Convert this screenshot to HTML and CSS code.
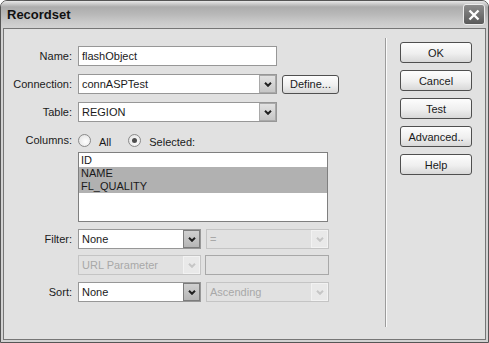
FILE: index.html
```html
<!DOCTYPE html>
<html lang="en">

<head>
    <meta charset="UTF-8">
    <meta name="viewport" content="width=device-width, initial-scale=1.0">
    <title>Recordset</title>
    <link rel="stylesheet" href="styles.css">
</head>

<body>
    <div class="window">
        <div class="titlebar">
            <span class="title">Recordset</span>
            <span class="close">
                <svg width="12" height="12" viewBox="0 0 12 12"><path d="M1.5 1.5 L10.5 10.5 M10.5 1.5 L1.5 10.5" stroke="#fff" stroke-width="2.4" fill="none"/></svg>
            </span>
        </div>
        <div class="body">
            <div class="form">
                <div class="row">
                    <span class="label">Name:</span>
                    <div class="field wide">flashObject</div>
                </div>
                <div class="row">
                    <span class="label">Connection:</span>
                    <div class="select wide">
                        <span class="value">connASPTest</span>
                        <span class="arrow"><svg width="8" height="5" viewBox="0 0 8 5"><polyline points="1,0.8 4,3.8 7,0.8" stroke="currentColor" stroke-width="2" fill="none"/></svg></span>
                    </div>
                    <div class="button define">Define...</div>
                </div>
                <div class="row">
                    <span class="label">Table:</span>
                    <div class="select wide">
                        <span class="value">REGION</span>
                        <span class="arrow"><svg width="8" height="5" viewBox="0 0 8 5"><polyline points="1,0.8 4,3.8 7,0.8" stroke="currentColor" stroke-width="2" fill="none"/></svg></span>
                    </div>
                </div>
                <div class="row">
                    <span class="label">Columns:</span>
                    <span class="radio"></span>
                    <span class="radio-text">All</span>
                    <span class="radio checked"></span>
                    <span class="radio-text">Selected:</span>
                </div>
                <div class="row list-row">
                    <span class="label"></span>
                    <div class="listbox">
                        <div class="item">ID</div>
                        <div class="item sel">NAME</div>
                        <div class="item sel">FL_QUALITY</div>
                    </div>
                </div>
                <div class="lower">
                    <div class="row">
                        <span class="label">Filter:</span>
                        <div class="select narrow">
                            <span class="value">None</span>
                            <span class="arrow dark"><svg width="8" height="5" viewBox="0 0 8 5"><polyline points="1,0.8 4,3.8 7,0.8" stroke="currentColor" stroke-width="2" fill="none"/></svg></span>
                        </div>
                        <div class="select narrow disabled gap">
                            <span class="value">=</span>
                            <span class="arrow"><svg width="8" height="5" viewBox="0 0 8 5"><polyline points="1,0.8 4,3.8 7,0.8" stroke="currentColor" stroke-width="2" fill="none"/></svg></span>
                        </div>
                    </div>
                    <div class="row">
                        <span class="label"></span>
                        <div class="select narrow disabled">
                            <span class="value">URL Parameter</span>
                            <span class="arrow"><svg width="8" height="5" viewBox="0 0 8 5"><polyline points="1,0.8 4,3.8 7,0.8" stroke="currentColor" stroke-width="2" fill="none"/></svg></span>
                        </div>
                        <div class="field disabled text-off"></div>
                    </div>
                    <div class="row sort-row">
                        <span class="label">Sort:</span>
                        <div class="select narrow">
                            <span class="value">None</span>
                            <span class="arrow dark"><svg width="8" height="5" viewBox="0 0 8 5"><polyline points="1,0.8 4,3.8 7,0.8" stroke="currentColor" stroke-width="2" fill="none"/></svg></span>
                        </div>
                        <div class="select narrow disabled gap">
                            <span class="value">Ascending</span>
                            <span class="arrow"><svg width="8" height="5" viewBox="0 0 8 5"><polyline points="1,0.8 4,3.8 7,0.8" stroke="currentColor" stroke-width="2" fill="none"/></svg></span>
                        </div>
                    </div>
                </div>
            </div>
            <div class="divider"></div>
            <div class="actions">
                <div class="button">OK</div>
                <div class="button">Cancel</div>
                <div class="button">Test</div>
                <div class="button">Advanced..</div>
                <div class="button">Help</div>
            </div>
        </div>
    </div>
</body>

</html>
```

FILE: styles.css
```css
body {
    margin: 0;
    font-family: "Liberation Sans", Arial, sans-serif;
    font-size: 11px;
    color: #1a1a1a;
    background: #ffffff;
}

.window {
    width: 489px;
    height: 343px;
    box-sizing: border-box;
    border: 1px solid #555555;
    border-radius: 7px 7px 0 0;
    background: #d2d2d2;
    display: flex;
    flex-direction: column;
    overflow: hidden;
}

.titlebar {
    height: 27px;
    flex: none;
    display: flex;
    align-items: center;
    justify-content: space-between;
    padding: 0 3px 0 6px;
    background: linear-gradient(#e8e8e8, #acacac 22%, #b9b9b9 50%, #cbcbcb 80%, #d3d3d3);
}

.title {
    font-weight: bold;
    font-size: 13px;
    color: #111;
}

.close {
    width: 22px;
    height: 21px;
    box-sizing: border-box;
    border: 1px solid #ececec;
    border-radius: 3px;
    background: linear-gradient(#8c8c8c, #5a5a5a);
    display: flex;
    align-items: center;
    justify-content: center;
}

.body {
    flex: 1;
    display: flex;
    margin: 0 2px 2px;
    border: 1px solid #767676;
    background: #e1e1e1;
}

/* left form */
.form {
    width: 376px;
    flex: none;
    display: flex;
    flex-direction: column;
    gap: 8px;
    padding-top: 17px;
}

.row {
    display: flex;
    align-items: center;
    height: 20px;
}

.label {
    width: 68px;
    flex: none;
    text-align: right;
    margin-right: 6px;
}

.field {
    height: 20px;
    box-sizing: border-box;
    border: 1px solid #979797;
    background: #ffffff;
    padding-left: 3px;
    line-height: 18px;
}

.wide {
    width: 199px;
}

.narrow {
    width: 123px;
}

.select {
    height: 20px;
    box-sizing: border-box;
    border: 1px solid #979797;
    background: #ffffff;
    display: flex;
    align-items: center;
}

.select .value {
    flex: 1;
    padding-left: 3px;
    white-space: nowrap;
    overflow: hidden;
}

.select .arrow {
    width: 17px;
    height: 18px;
    box-sizing: border-box;
    border: 1px solid #a9a9a9;
    background: linear-gradient(#e2e2e2, #c6c6c6);
    color: #222;
    display: flex;
    align-items: center;
    justify-content: center;
}

.select .arrow.dark {
    border-color: #7c7c7c;
    background: linear-gradient(#d0d0d0, #b6b6b6);
}

.select.disabled {
    background: #e1e1e1;
    border-color: #c4c4c4;
    color: #a8a8a8;
}

.select.disabled .arrow {
    border-color: #f2f2f2;
    background: #e9e9e9;
    color: #c6c6c6;
}

.gap {
    margin-left: 5px;
}

.text-off {
    width: 124px;
    margin-left: 4px;
    background: #e1e1e1;
    border-color: #a8a8a8;
}

.button {
    width: 72px;
    height: 21px;
    box-sizing: border-box;
    border: 1px solid #4f4f4f;
    border-radius: 3px;
    background: linear-gradient(#fdfdfd, #efefef 55%, #d8d8d8);
    display: flex;
    align-items: center;
    justify-content: center;
}

.button.define {
    width: 57px;
    height: 19px;
    margin-left: 5px;
}

/* radios */
.radio {
    width: 13px;
    height: 13px;
    box-sizing: border-box;
    border: 1px solid #8a8a8a;
    border-radius: 50%;
    background: radial-gradient(circle at 60% 60%, #ffffff, #dedede);
    display: flex;
    align-items: center;
    justify-content: center;
    margin-top: 1px;
}

.radio.checked::after {
    content: "";
    width: 5px;
    height: 5px;
    border-radius: 50%;
    background: #4e4e4e;
}

.radio-text {
    margin: 3px 17px 0 8px;
}

/* column list */
.list-row {
    height: 70px;
    margin-top: -6px;
    align-items: flex-start;
}

.listbox {
    width: 250px;
    height: 70px;
    box-sizing: border-box;
    border: 1px solid #7f7f7f;
    background: #ffffff;
    padding-top: 1px;
}

.item {
    height: 13px;
    line-height: 13px;
    padding-left: 2px;
}

.item.sel {
    background: #b1b1b1;
}

.lower {
    display: flex;
    flex-direction: column;
    gap: 6px;
    margin-top: -1px;
}

.sort-row {
    margin-top: 1px;
}

/* right side */
.divider {
    width: 1px;
    height: 289px;
    margin: 9px 0 0 5px;
    background: #9c9c9c;
    border-right: 1px solid #fafafa;
}

.actions {
    display: flex;
    flex-direction: column;
    gap: 7px;
    padding-top: 13px;
    margin-left: 13px;
}
```
